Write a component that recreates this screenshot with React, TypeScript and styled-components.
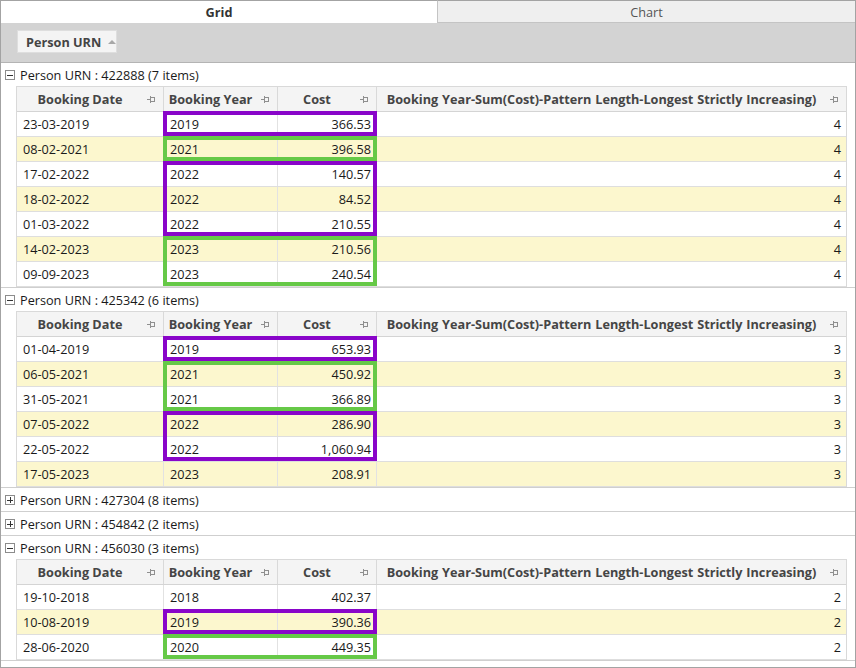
import React from "react";
import styled, { createGlobalStyle } from "styled-components";

type Row = { date: string; year: string; cost: string };
type Box = { start: number; count: number; tone: "purple" | "green" };
type Group = {
  urn: string;
  value: number;
  total: number;
  rows: Row[];
  boxes: Box[];
  open: boolean;
};

const GlobalStyle = createGlobalStyle`
  html, body {
    margin: 0;
    padding: 0;
    background: #ffffff;
  }
  body {
    font-family: "Open Sans", "Noto Sans", sans-serif;
    font-size: 12.7px;
    color: #1a1a1a;
  }
`;

const Frame = styled.div`
  width: 856px;
  height: 668px;
  box-sizing: border-box;
  border: 1px solid #a3a3a3;
  border-top: 0;
  overflow: hidden;
  background: #fff;
  display: flex;
  flex-direction: column;
`;

const TabBar = styled.div`
  display: flex;
  height: 23px;
  flex-shrink: 0;
`;

const Tab = styled.div<{ $active?: boolean }>`
  flex: ${(p) => (p.$active ? "0 0 436px" : "1")};
  box-sizing: border-box;
  display: flex;
  align-items: center;
  justify-content: center;
  border-top: 1px solid #a3a3a3;
  border-bottom: ${(p) => (p.$active ? "none" : "1px solid #c4c4c4")};
  border-left: ${(p) => (p.$active ? "none" : "1px solid #c4c4c4")};
  background: ${(p) => (p.$active ? "#ffffff" : "#efefef")};
  color: ${(p) => (p.$active ? "#333" : "#555")};
  font-weight: ${(p) => (p.$active ? 700 : 400)};
`;

const GroupPanel = styled.div`
  height: 40px;
  flex-shrink: 0;
  background: #d3d3d3;
  border-bottom: 1px solid #b4b4b4;
  padding: 7px 0 0 16px;
  box-sizing: border-box;
`;

const GroupChip = styled.div`
  width: 100px;
  height: 23px;
  box-sizing: border-box;
  background: #f4f4f4;
  border: 1px solid #dedede;
  display: flex;
  align-items: center;
  padding: 0 0 0 8px;
  gap: 7px;
  font-weight: 700;
  color: #444;
  white-space: nowrap;
`;

const SortArrow = styled.span`
  flex-shrink: 0;
  width: 0;
  height: 0;
  border-left: 4px solid transparent;
  border-right: 4px solid transparent;
  border-bottom: 4px solid #a8a8a8;
`;

const GroupBlock = styled.div`
  border-bottom: 1px solid #cfcfcf;
`;

const GroupRow = styled.div`
  height: 23px;
  box-sizing: border-box;
  padding: 0 0 0 4px;
  display: flex;
  align-items: center;
  gap: 5px;
  color: #1a1a1a;
`;

const Expander = styled.span`
  width: 10px;
  height: 10px;
  box-sizing: border-box;
  border: 1px solid #8c8c8c;
  position: relative;
  flex-shrink: 0;
  margin-top: 1px;
  &::before {
    content: "";
    position: absolute;
    left: 1px;
    right: 1px;
    top: 3.5px;
    height: 1px;
    background: #333;
  }
`;

const ExpanderPlus = styled(Expander)`
  &::after {
    content: "";
    position: absolute;
    top: 1px;
    bottom: 1px;
    left: 3.5px;
    width: 1px;
    background: #333;
  }
`;

const Table = styled.div`
  position: relative;
  margin: 0 8px 0 15px;
  border: 1px solid #d9d9d9;
  border-bottom: 0;
`;

const GridRow = styled.div<{ $alt?: boolean }>`
  display: grid;
  grid-template-columns: 147px 114px 99px 1fr;
  height: 25px;
  box-sizing: border-box;
  border-bottom: 1px solid #dedede;
  background: ${(p) => (p.$alt ? "#fcf7ce" : "#ffffff")};
`;

const HeadRow = styled(GridRow)`
  background: #f4f4f4;
  border-bottom-color: #d4d4d4;
`;

const HeadCell = styled.div<{ $last?: boolean }>`
  position: relative;
  display: flex;
  align-items: center;
  justify-content: center;
  padding-right: 20px;
  border-right: ${(p) => (p.$last ? "none" : "1px solid #d9d9d9")};
  font-weight: 700;
  color: #454545;
  white-space: nowrap;
  overflow: hidden;
  word-spacing: ${(p) => (p.$last ? "0.6px" : "0")};
`;

const PinIcon = styled.svg`
  position: absolute;
  right: 7px;
  top: 9px;
`;

const Cell = styled.div<{ $align?: "left" | "right"; $last?: boolean }>`
  display: flex;
  align-items: center;
  justify-content: ${(p) => (p.$align === "right" ? "flex-end" : "flex-start")};
  padding: ${(p) => (p.$align === "right" ? "0 5px 0 0" : "0 0 0 6px")};
  border-right: ${(p) => (p.$last ? "none" : "1px solid #e2e2e2")};
  white-space: nowrap;
  color: #1a1a1a;
`;

const Highlight = styled.div<{ $tone: "purple" | "green" }>`
  position: absolute;
  left: 146px;
  width: 214px;
  box-sizing: border-box;
  border: 4px solid ${(p) => (p.$tone === "purple" ? "#8905c9" : "#66c947")};
  pointer-events: none;
`;

const Pin = () => (
  <PinIcon width="9" height="7" viewBox="0 0 9 7">
    <g stroke="#8f8f8f" strokeWidth="1" fill="none">
      <line x1="0" y1="3.5" x2="3.5" y2="3.5" />
      <line x1="3.5" y1="0" x2="3.5" y2="7" />
      <rect x="3.5" y="1.5" width="4" height="4" />
    </g>
  </PinIcon>
);

const headers = [
  "Booking Date",
  "Booking Year",
  "Cost",
  "Booking Year-Sum(Cost)-Pattern Length-Longest Strictly Increasing)",
];

const groups: Group[] = [
  {
    urn: "422888",
    value: 4,
    total: 7,
    open: true,
    rows: [
      { date: "23-03-2019", year: "2019", cost: "366.53" },
      { date: "08-02-2021", year: "2021", cost: "396.58" },
      { date: "17-02-2022", year: "2022", cost: "140.57" },
      { date: "18-02-2022", year: "2022", cost: "84.52" },
      { date: "01-03-2022", year: "2022", cost: "210.55" },
      { date: "14-02-2023", year: "2023", cost: "210.56" },
      { date: "09-09-2023", year: "2023", cost: "240.54" },
    ],
    boxes: [
      { start: 0, count: 1, tone: "purple" },
      { start: 1, count: 1, tone: "green" },
      { start: 2, count: 3, tone: "purple" },
      { start: 5, count: 2, tone: "green" },
    ],
  },
  {
    urn: "425342",
    value: 3,
    total: 6,
    open: true,
    rows: [
      { date: "01-04-2019", year: "2019", cost: "653.93" },
      { date: "06-05-2021", year: "2021", cost: "450.92" },
      { date: "31-05-2021", year: "2021", cost: "366.89" },
      { date: "07-05-2022", year: "2022", cost: "286.90" },
      { date: "22-05-2022", year: "2022", cost: "1,060.94" },
      { date: "17-05-2023", year: "2023", cost: "208.91" },
    ],
    boxes: [
      { start: 0, count: 1, tone: "purple" },
      { start: 1, count: 2, tone: "green" },
      { start: 3, count: 2, tone: "purple" },
    ],
  },
  { urn: "427304", value: 0, total: 8, open: false, rows: [], boxes: [] },
  { urn: "454842", value: 0, total: 2, open: false, rows: [], boxes: [] },
  {
    urn: "456030",
    value: 2,
    total: 3,
    open: true,
    rows: [
      { date: "19-10-2018", year: "2018", cost: "402.37" },
      { date: "10-08-2019", year: "2019", cost: "390.36" },
      { date: "28-06-2020", year: "2020", cost: "449.35" },
    ],
    boxes: [
      { start: 1, count: 1, tone: "purple" },
      { start: 2, count: 1, tone: "green" },
    ],
  },
];

const ROW_H = 25;
const HEAD_H = 24;

const GroupTable = ({ group }: { group: Group }) => (
  <Table>
    <HeadRow>
      {headers.map((h, i) => (
        <HeadCell key={h} $last={i === headers.length - 1}>
          {h}
          <Pin />
        </HeadCell>
      ))}
    </HeadRow>
    {group.rows.map((r, i) => (
      <GridRow key={r.date} $alt={i % 2 === 1}>
        <Cell>{r.date}</Cell>
        <Cell>{r.year}</Cell>
        <Cell $align="right">{r.cost}</Cell>
        <Cell $align="right" $last>
          {group.value}
        </Cell>
      </GridRow>
    ))}
    {group.boxes.map((b) => (
      <Highlight
        key={b.start}
        $tone={b.tone}
        style={{ top: HEAD_H + b.start * ROW_H, height: b.count * ROW_H }}
      />
    ))}
  </Table>
);

export default function App() {
  return (
    <>
      <GlobalStyle />
      <Frame>
        <TabBar>
          <Tab $active>Grid</Tab>
          <Tab>Chart</Tab>
        </TabBar>
        <GroupPanel>
          <GroupChip>
            Person URN
            <SortArrow />
          </GroupChip>
        </GroupPanel>
        {groups.map((g) => (
          <GroupBlock key={g.urn}>
            <GroupRow>
              {g.open ? <Expander /> : <ExpanderPlus />}
              <span>
                Person URN : {g.urn} ({g.total} items)
              </span>
            </GroupRow>
            {g.open && <GroupTable group={g} />}
          </GroupBlock>
        ))}
      </Frame>
    </>
  );
}
